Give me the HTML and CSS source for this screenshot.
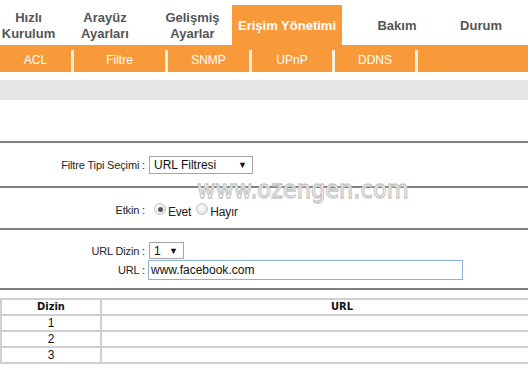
FILE: index.html
```html
<!DOCTYPE html>
<html lang="tr">
<head>
<meta charset="utf-8">
<link rel="stylesheet" href="styles.css">
</head>
<body>
<nav class="mainnav">
  <div class="tab t1">Hızlı<br>Kurulum</div>
  <div class="tab t2">Arayüz<br>Ayarları</div>
  <div class="tab t3">Gelişmiş<br>Ayarlar</div>
  <div class="tab t4 active">Erişim Yönetimi</div>
  <div class="tab t5">Bakım</div>
  <div class="tab t6">Durum</div>
</nav>
<div class="subnav">
  <div class="sub s1">ACL</div>
  <div class="sep"></div>
  <div class="sub s2">Filtre</div>
  <div class="sep"></div>
  <div class="sub s3">SNMP</div>
  <div class="sep"></div>
  <div class="sub s4">UPnP</div>
  <div class="sep"></div>
  <div class="sub s5">DDNS</div>
  <div class="sep"></div>
</div>
<div class="graybar"></div>
<div class="blank"></div>
<section class="row r1">
  <div class="label">Filtre Tipi Seçimi :</div>
  <div class="select sel-wide"><span>URL Filtresi</span><span class="arrow">▼</span></div>
</section>
<section class="row r2">
  <div class="label">Etkin :</div>
  <div class="radios">
    <span class="radio checked"></span><span class="rlabel">Evet</span>
    <span class="radio"></span><span class="rlabel">Hayır</span>
  </div>
  <div class="watermark">www.ozengen.com</div>
</section>
<section class="row r3">
  <div class="line">
    <div class="label">URL Dizin :</div>
    <div class="select sel-small"><span>1</span><span class="arrow">▼</span></div>
  </div>
  <div class="line">
    <div class="label">URL :</div>
    <div class="input">www.facebook.com</div>
  </div>
</section>
<section class="tablewrap">
  <table class="list">
    <tr class="head"><th class="c1">Dizin</th><th class="c2">URL</th></tr>
    <tr><td class="c1">1</td><td class="c2"></td></tr>
    <tr><td class="c1">2</td><td class="c2"></td></tr>
    <tr><td class="c1">3</td><td class="c2"></td></tr>
  </table>
</section>
</body>
</html>
```
FILE: styles.css
```css
html, body {
  margin: 0;
  padding: 0;
  background: #fff;
  font-family: "Liberation Sans", Arial, sans-serif;
  width: 528px;
  height: 365px;
  overflow: hidden;
}

.mainnav {
  display: flex;
  height: 45px;
  align-items: flex-end;
}
.tab {
  box-sizing: border-box;
  height: 40px;
  display: flex;
  align-items: center;
  justify-content: center;
  text-align: center;
  font-weight: bold;
  font-size: 13px;
  line-height: 16px;
  color: #555;
  padding-top: 1px;
}
.t1 { width: 57px; }
.t2 { width: 96px; }
.t3 { width: 79px; }
.t4 { width: 110px; }
.t5 { width: 110px; }
.t6 { width: 58px; }
.tab.active {
  background: #f89a3a;
  color: #fff;
}

.subnav {
  display: flex;
  height: 27px;
  background: #f89a3a;
  align-items: stretch;
}
.sub {
  color: #fff;
  font-size: 12px;
  display: flex;
  align-items: center;
  justify-content: center;
  padding-top: 2px;
}
.s1 { width: 71px; }
.s2 { width: 91px; }
.s3 { width: 81px; }
.s4 { width: 80px; }
.s5 { width: 80px; }
.sep {
  width: 3px;
  margin-top: 5px;
  background: #fdf2df;
}

.graybar {
  margin-top: 8px;
  height: 20px;
  background: #e6e6e6;
}
.blank {
  height: 41px;
}

.row {
  position: relative;
  border-top: 2px solid #808080;
  box-sizing: border-box;
  font-size: 12px;
  color: #222;
}
.r1 {
  height: 45px;
  display: flex;
  align-items: center;
}
.r2 {
  height: 42px;
  display: flex;
  align-items: center;
  padding-top: 4px;
}
.r3 {
  height: 60px;
  padding-top: 11px;
}
.line {
  display: flex;
  align-items: center;
  height: 19px;
}
.label {
  width: 149px;
  text-align: right;
  padding-right: 4px;
  box-sizing: border-box;
  flex: none;
  font-size: 11px;
  letter-spacing: -0.15px;
}

.select {
  box-sizing: border-box;
  height: 18px;
  border: 1px solid #a5a5a5;
  background: #fff;
  display: flex;
  align-items: center;
  justify-content: space-between;
  padding: 0 5px 0 4px;
  font-size: 12px;
  color: #111;
}
.sel-wide { width: 104px; }
.sel-small { width: 35px; height: 17px; }
.arrow { font-size: 9px; color: #111; }

.radios {
  display: flex;
  align-items: center;
  padding-left: 5px;
}
.radio {
  width: 12px;
  height: 12px;
  border-radius: 50%;
  box-sizing: border-box;
  border: 1px solid #c4c4c4;
  background: radial-gradient(circle at 40% 40%, #fff, #d8d8d8);
  margin-right: 2px;
  position: relative;
  top: -1px;
}
.radio.checked::after {
  content: "";
  position: absolute;
  left: 2.5px;
  top: 2.5px;
  width: 5px;
  height: 5px;
  border-radius: 50%;
  background: #555;
}
.rlabel {
  margin-right: 5px;
  position: relative;
  top: 2px;
  letter-spacing: -0.2px;
}

.watermark {
  position: absolute;
  left: 197px;
  top: -7px;
  height: 18px;
  line-height: 18px;
  font-family: "DejaVu Sans", sans-serif;
  font-size: 25px;
  color: #fff;
  -webkit-text-stroke: 1.3px #c6c6c6;
  transform: scaleX(0.9);
  transform-origin: left center;
  pointer-events: none;
}

.input {
  box-sizing: border-box;
  width: 315px;
  height: 20px;
  margin-left: -1px;
  border: 1px solid #8db2d8;
  padding-left: 2px;
  font-size: 12px;
  display: flex;
  align-items: center;
  color: #111;
}

.tablewrap {
  border-top: 2px solid #808080;
  padding-top: 8px;
}
.list {
  width: 100%;
  border-collapse: collapse;
  font-size: 12px;
}
.list th, .list td {
  border-top: 2px solid #cfcfcf;
  border-bottom: 2px solid #cfcfcf;
  border-left: 0;
  border-right: 0;
  height: 14px;
  padding: 0;
  text-align: center;
  line-height: 14px;
  color: #111;
}
.list .c1 { width: 98px; border-left: 2px solid #cfcfcf; border-right: 2px solid #cfcfcf; }
.list th { font-weight: bold; font-family: "DejaVu Sans Condensed", "DejaVu Sans", sans-serif; font-size: 11px; }
.list th.c2 { text-align: left; padding-left: 229px; }
```
